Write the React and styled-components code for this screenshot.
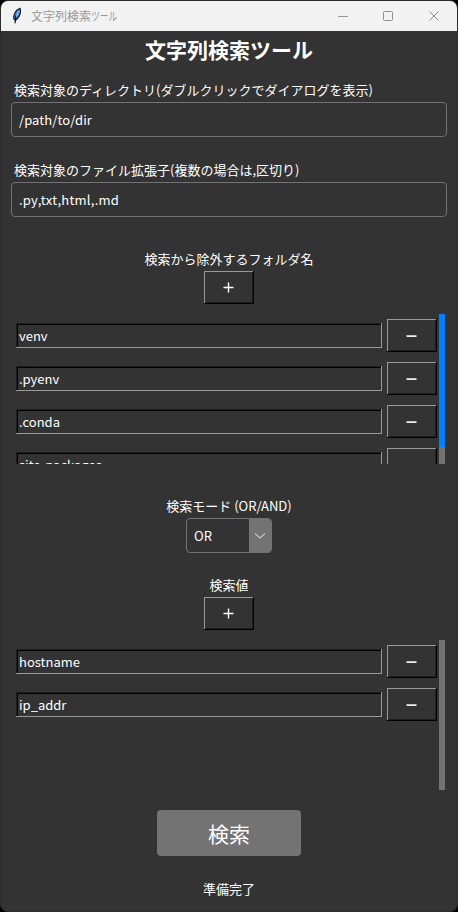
import React from "react";
import styled, { createGlobalStyle, css } from "styled-components";

const GlobalStyle = createGlobalStyle`
  * { box-sizing: border-box; }
  body { margin: 0; background: #000; }
  button, input { font: inherit; color: inherit; margin: 0; }
`;

const Window = styled.div`
  width: 458px;
  height: 912px;
  display: flex;
  flex-direction: column;
  overflow: hidden;
  background: #333;
  border: 1px solid #2d2d2d;
  border-radius: 8px;
  color: #fff;
  font: 13px/19px "Noto Sans CJK JP", sans-serif;
`;

const TitleBar = styled.header`
  height: 30px;
  flex: none;
  display: flex;
  align-items: center;
  padding-left: 8px;
  background: #f2f2f2;
  color: #999;
`;

const WindowTitle = styled.div`
  flex: 1;
  margin-left: 6px;
  font-size: 12px;
  line-height: 18px;
  white-space: nowrap;
`;

const Narrow = styled.span`
  display: inline-block;
  transform: scaleX(0.73);
  transform-origin: left center;
`;

const WindowButton = styled.span`
  width: ${(p) => p.$width || 46}px;
  height: 30px;
  display: flex;
  align-items: center;
  justify-content: center;
`;

const Content = styled.main`
  flex: 1;
  display: flex;
  flex-direction: column;
  align-items: center;
  padding: 0 10px;
`;

const Heading = styled.h1`
  margin: 3px 0 15px;
  font-size: 21px;
  line-height: 31px;
  font-weight: 700;
`;

const Label = styled.label`
  display: block;
  height: 19px;
  margin-bottom: 3px;
  white-space: nowrap;
`;

const Field = styled.div`
  width: 436px;
  display: flex;
  flex-direction: column;
  margin-bottom: ${(p) => p.$gap}px;

  ${Label} { padding-left: 3px; }
`;

const TextInput = styled.input`
  width: 100%;
  height: 35px;
  padding: 0 7px;
  background: #333;
  border: 1px solid #737373;
  border-radius: 4px;
  outline: none;
  letter-spacing: ${(p) => p.$tracking}px;
`;

const bevel = css`
  background: #333;
  border: 0;
  border-radius: 0;
`;

const BevelButton = styled.button`
  ${bevel}
  width: 50px;
  height: 33px;
  flex: none;
  display: flex;
  align-items: center;
  justify-content: center;
  padding: 0 1px 0 0;
  box-shadow: inset -1px -1px #000, inset 1px 1px #999, inset -2px -2px #1f1f1f;
`;

const BevelInput = styled.input`
  ${bevel}
  width: 366px;
  height: 25px;
  padding: 0 3px;
  outline: none;
  box-shadow: inset -1px -1px #999, inset 1px 1px #1f1f1f, inset 2px 2px #000;
`;

const ScrollArea = styled.div`
  width: 430px;
  height: 150px;
  flex: none;
  display: flex;
  overflow: hidden;
  align-self: flex-start;
  margin: 10px 0 ${(p) => p.$gap}px 5px;
`;

const Rows = styled.div`
  width: 423px;
  flex: none;
  display: flex;
  flex-direction: column;
  gap: 10px;
  padding-top: 5px;
`;

const Row = styled.div`
  height: 33px;
  flex: none;
  display: flex;
  align-items: center;
  gap: 5px;
`;

const Track = styled.div`
  width: 6px;
  height: 150px;
  background: #737373;
`;

const Thumb = styled.div`
  height: 133px;
  background: #0080ff;
`;

const Select = styled.div`
  width: 86px;
  height: 35px;
  flex: none;
  display: flex;
  align-items: center;
  margin: 0 0 22px;
  border: 1px solid #737373;
  border-radius: 4px;
  overflow: hidden;
`;

const SelectValue = styled.span`
  flex: 1;
  padding-left: 7px;
`;

const SelectArrow = styled.span`
  width: 22px;
  height: 33px;
  display: flex;
  align-items: center;
  justify-content: center;
  background: #737373;
`;

const SearchButton = styled.button`
  width: 144px;
  height: 46px;
  flex: none;
  padding: 0;
  margin-bottom: 23px;
  background: #737373;
  border: 0;
  border-radius: 4px;
  font-size: 21px;
  line-height: 31px;
`;

const Feather = () => (
  <svg width="16" height="18" viewBox="0 0 16 18">
    <path d="M5.2 12.6C3.6 9.2 6 3.3 11 1.4C12.4 3.5 11.4 9.2 7.4 12.7Z" fill="#4b8cda" stroke="#111c2b" strokeWidth="1.2" />
    <path d="M6.9 8.4L6.1 16.2" fill="none" stroke="#07111d" strokeWidth="1.2" />
    <path d="M10.2 3.6C8.9 5.5 8 7.4 7.6 9.4" fill="none" stroke="#a2d0fa" strokeWidth="1" />
  </svg>
);

const Plus = () => (
  <svg width="11" height="11" viewBox="0 0 11 11">
    <path d="M5.5 .5V10.5M.5 5.5H10.5" stroke="#fff" strokeWidth="1.4" />
  </svg>
);

const Minus = () => (
  <svg width="11" height="2" viewBox="0 0 11 2">
    <path d="M.5 .5H10.5" stroke="#c4c4c4" />
    <path d="M.5 1.5H10.5" stroke="#eee" />
  </svg>
);

const EntryList = ({ items, gap, scrollable }) => (
  <ScrollArea $gap={gap}>
    <Rows>
      {items.map((item) => (
        <Row key={item}>
          <BevelInput defaultValue={item} />
          <BevelButton aria-label="削除"><Minus /></BevelButton>
        </Row>
      ))}
    </Rows>
    <Track>{scrollable && <Thumb />}</Track>
  </ScrollArea>
);

export default function App() {
  return (
    <>
      <GlobalStyle />
      <Window>
        <TitleBar>
          <Feather />
          <WindowTitle>文字列検索<Narrow>ツール</Narrow></WindowTitle>
          <WindowButton $width={44}>
            <svg width="10" height="10"><path d="M0 5.5H10" stroke="#999" /></svg>
          </WindowButton>
          <WindowButton>
            <svg width="10" height="10"><rect x=".5" y=".5" width="9" height="9" rx="1" fill="none" stroke="#8f8f8f" /></svg>
          </WindowButton>
          <WindowButton>
            <svg width="10" height="10"><path d="M.3 .3L9.7 9.7M9.7 .3L.3 9.7" stroke="#8f8f8f" /></svg>
          </WindowButton>
        </TitleBar>
        <Content>
          <Heading>文字列検索ツール</Heading>
          <Field $gap={23}>
            <Label>検索対象のディレクトリ(ダブルクリックでダイアログを表示)</Label>
            <TextInput defaultValue="/path/to/dir" $tracking={0.08} />
          </Field>
          <Field $gap={32}>
            <Label>検索対象のファイル拡張子(複数の場合は,区切り)</Label>
            <TextInput defaultValue=".py,txt,html,.md" $tracking={0.25} />
          </Field>
          <Label>検索から除外するフォルダ名</Label>
          <BevelButton aria-label="追加"><Plus /></BevelButton>
          <EntryList items={["venv", ".pyenv", ".conda", "site-packages"]} gap={32} scrollable />
          <Label>検索モード (OR/AND)</Label>
          <Select>
            <SelectValue>OR</SelectValue>
            <SelectArrow>
              <svg width="12" height="8"><path d="M1 1.5L6 6L11 1.5" fill="none" stroke="#c4c4c4" strokeWidth="1.1" /></svg>
            </SelectArrow>
          </Select>
          <Label>検索値</Label>
          <BevelButton aria-label="追加"><Plus /></BevelButton>
          <EntryList items={["hostname", "ip_addr"]} gap={20} />
          <SearchButton>検索</SearchButton>
          <Label>準備完了</Label>
        </Content>
      </Window>
    </>
  );
}
